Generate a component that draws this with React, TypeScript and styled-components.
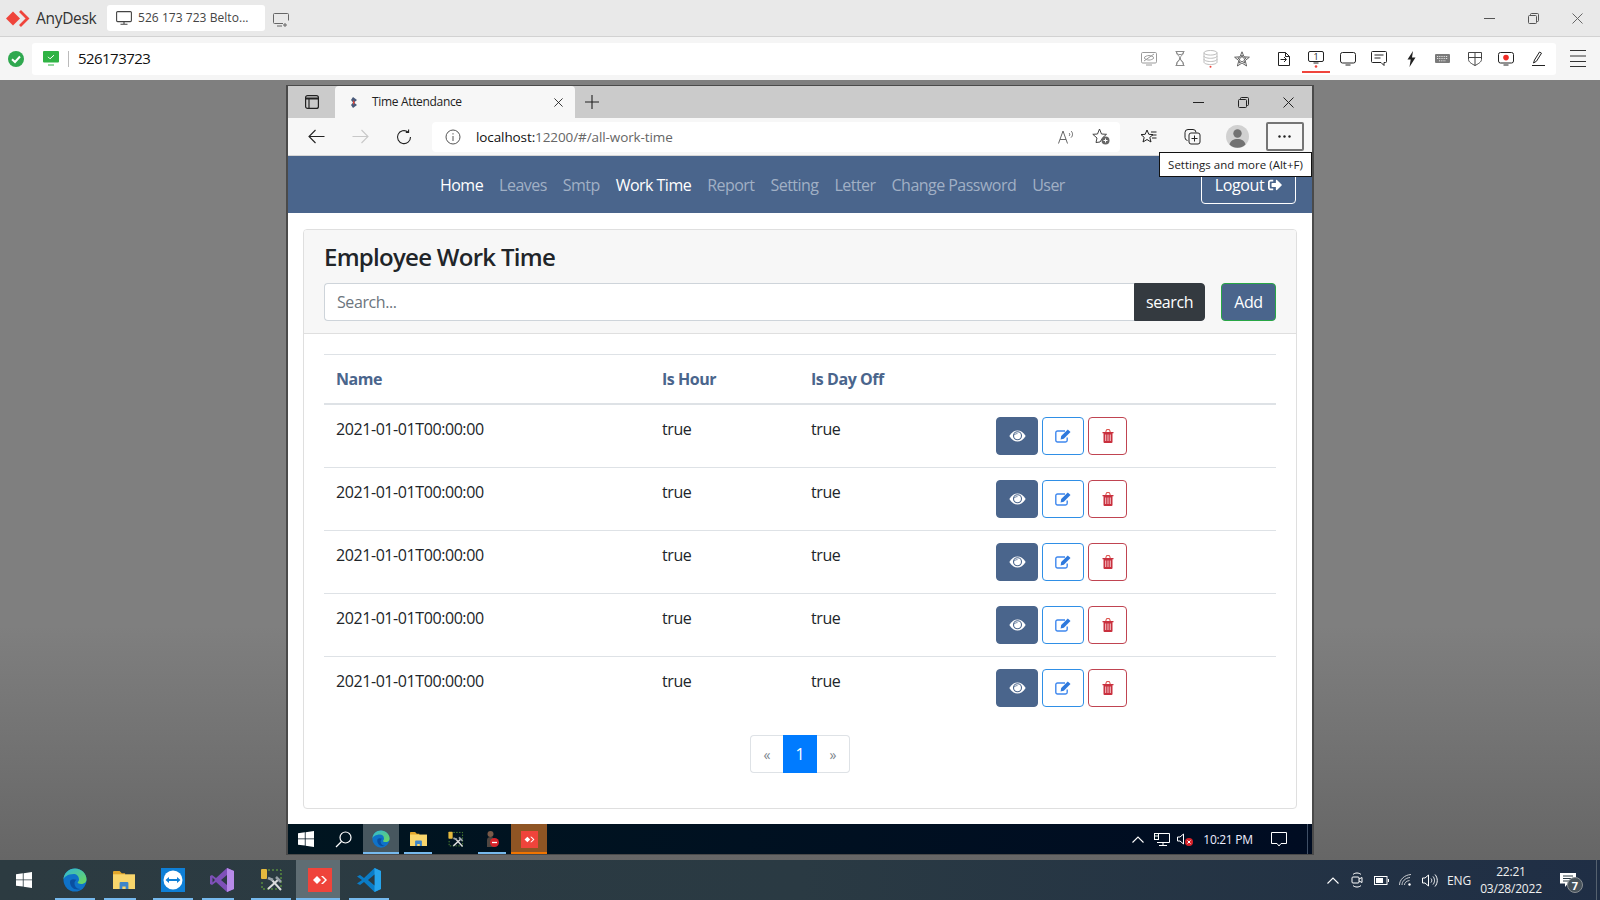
import React from "react";
import styled, { createGlobalStyle } from "styled-components";
import { FaSignOutAlt } from "react-icons/fa";

const sans = '"Open Sans", "Noto Sans", sans-serif';

const Global = createGlobalStyle`
  html, body { margin: 0; padding: 0; height: 100%; overflow: hidden; }
  body { font-family: ${sans}; color: #212529; }
  * { box-sizing: border-box; }
  svg { display: block; }
`;

const Screen = styled.div`
  width: 1600px;
  height: 900px;
  display: flex;
  flex-direction: column;
  overflow: hidden;
`;

/* ---------- AnyDesk chrome ---------- */
const AdTitleBar = styled.div`
  height: 37px;
  flex: none;
  background: #e9e9e9;
  border-bottom: 1px solid #d2d2d2;
  display: flex;
  align-items: center;
  padding-left: 6px;
`;
const AdBrand = styled.div`
  display: flex;
  align-items: center;
  gap: 6px;
  width: 101px;
  font-size: 15.5px;
  font-weight: 500;
  letter-spacing: -0.3px;
  color: #333;
`;
const AdTab = styled.div`
  width: 158px;
  height: 26px;
  margin-bottom: 1px;
  background: #fff;
  border-radius: 3px;
  display: flex;
  align-items: center;
  gap: 6px;
  padding-left: 9px;
  font-size: 12px;
  letter-spacing: 0.05px;
  color: #444;
  white-space: nowrap;
`;
const AdNewTab = styled.div`
  margin-left: 8px;
  margin-top: 4px;
`;
const WinControls = styled.div`
  margin-left: auto;
  display: flex;
  margin-right: 1px;
`;
const AdControl = styled.div`
  width: 44px;
  display: flex;
  justify-content: center;
`;
const AdAddressRow = styled.div`
  height: 43px;
  flex: none;
  background: #f5f5f5;
  display: flex;
  align-items: center;
  padding: 0 0 0 8px;
`;
const AdStatus = styled.div`
  width: 24px;
  flex: none;
`;
const AdField = styled.div`
  width: 1524px;
  height: 32px;
  background: #fff;
  border-radius: 3px;
  display: flex;
  align-items: center;
  padding-left: 11px;
  padding-right: 2px;
`;
const AdDivider = styled.div`
  width: 1px;
  height: 16px;
  background: #bbb;
  margin: 0 9px 0 9px;
`;
const AdNumber = styled.div`
  margin-bottom: 2px;
  font-size: 15px;
  letter-spacing: -0.55px;
  color: #111;
`;
const AdTools = styled.div`
  margin-left: auto;
  display: flex;
  align-items: center;
`;
const AdToolGroup = styled.div`
  display: flex;
  margin-right: 11px;
`;
const AdTool = styled.div<{ $w?: number; $on?: boolean }>`
  width: ${(p) => p.$w ?? 31.75}px;
  height: 32px;
  display: flex;
  align-items: center;
  justify-content: center;
  flex: none;
  position: relative;
  ${(p) => p.$on && `&::after { content: ""; position: absolute; left: 2px; right: 2px; bottom: 2px; height: 2px; background: #ef443b; }`}
`;
const AdMenu = styled.div`
  width: 44px;
  display: flex;
  justify-content: center;
`;

/* ---------- Desktop ---------- */
const Desktop = styled.div`
  flex: 1;
  background: linear-gradient(#7f7f7f 0, #7f7f7f 70%, #666 100%);
  padding: 5px 0 0 286px;
`;
const BrowserWindow = styled.div`
  width: 1028px;
  height: 770px;
  border: 2px solid #4a4a4a;
  border-top-width: 1px;
  border-bottom-width: 1px;
  display: flex;
  flex-direction: column;
  position: relative;
  background: #fff;
`;
const TabStrip = styled.div`
  height: 32px;
  flex: none;
  background: #cbcbcb;
  display: flex;
  align-items: flex-end;
`;
const StripIcon = styled.div`
  width: 47px;
  height: 32px;
  display: flex;
  align-items: center;
  justify-content: center;
`;
const BrowserTab = styled.div`
  width: 240px;
  height: 32px;
  background: #f7f7f7;
  border-radius: 4px 4px 0 0;
  display: flex;
  align-items: center;
  padding-left: 15px;
  font-size: 12px;
  letter-spacing: -0.33px;
  color: #222;
`;
const TabTitle = styled.span`
  margin-left: 14px;
  margin-bottom: 2px;
  flex: 1;
`;
const TabClose = styled.div`
  margin-right: 12px;
`;
const PlusBox = styled.div`
  width: 34px;
  height: 32px;
  display: flex;
  align-items: center;
  justify-content: center;
`;
const BrowserControl = styled.div`
  width: 45px;
  height: 32px;
  display: flex;
  align-items: center;
  justify-content: center;
`;
const Toolbar = styled.div`
  height: 38px;
  flex: none;
  background: #f7f7f7;
  border-bottom: 1px solid #d6d6d6;
  display: flex;
  align-items: center;
  padding-left: 6px;
`;
const NavIcon = styled.div`
  width: 44px;
  display: flex;
  justify-content: center;
`;
const Address = styled.div`
  width: 688px;
  height: 30px;
  margin-left: 6px;
  background: #fff;
  border-radius: 4px;
  display: flex;
  align-items: center;
  padding-left: 13px;
  font-size: 13.5px;
  letter-spacing: -0.1px;
  color: #666;
`;
const Host = styled.span`
  color: #111;
  margin-left: 15px;
`;
const AddressEnd = styled.div`
  margin-left: auto;
  display: flex;
  align-items: center;
  gap: 17px;
  padding-right: 10px;
`;
const ToolGroup = styled.div`
  margin-left: 6px;
  display: flex;
  align-items: center;
`;
const ToolIcon = styled.div`
  width: 44.5px;
  display: flex;
  justify-content: center;
`;
const MoreButton = styled.div`
  width: 38px;
  height: 29px;
  margin-left: 6px;
  border: 2px solid #757575;
  border-radius: 2px;
  display: flex;
  align-items: center;
  justify-content: center;
`;
const Tooltip = styled.div`
  position: absolute;
  top: 66px;
  right: 0;
  width: 153px;
  height: 25px;
  background: #fff;
  border: 1px solid #111;
  display: flex;
  align-items: center;
  justify-content: center;
  font-size: 11.5px;
  letter-spacing: 0.02px;
  color: #222;
  white-space: nowrap;
  z-index: 5;
`;

/* ---------- Page ---------- */
const NavBar = styled.div`
  height: 57px;
  flex: none;
  background: #4a658c;
  display: flex;
  align-items: center;
  padding-left: 144px;
  padding-right: 16px;
`;
const NavItem = styled.a<{ $active?: boolean }>`
  padding: 8px;
  font-size: 16px;
  line-height: 24px;
  letter-spacing: -0.53px;
  color: ${(p) => (p.$active ? "#fff" : "#a1b0c5")};
  white-space: nowrap;
`;
const LogoutButton = styled.button`
  margin-left: auto;
  margin-top: 1px;
  width: 95px;
  height: 38px;
  background: transparent;
  border: 1px solid #fff;
  border-radius: 4px;
  color: #fff;
  font-family: ${sans};
  font-size: 16px;
  letter-spacing: -0.4px;
  display: flex;
  align-items: center;
  justify-content: center;
  gap: 4px;
`;
const Main = styled.div`
  flex: 1;
  padding: 16px 15px 15px 15px;
`;
const Card = styled.div`
  height: 580px;
  background: #fff;
  border: 1px solid #dfdfdf;
  border-radius: 4px;
  overflow: hidden;
`;
const CardHeader = styled.div`
  height: 104px;
  background: #f7f7f7;
  border-bottom: 1px solid #dfdfdf;
  padding: 12px 20px;
`;
const CardTitle = styled.h4`
  margin: 0 0 12px;
  font-size: 24px;
  line-height: 29px;
  font-weight: 600;
  letter-spacing: -0.72px;
  color: #212529;
`;
const SearchRow = styled.div`
  display: flex;
`;
const SearchInput = styled.input`
  flex: 1;
  min-width: 0;
  height: 38px;
  padding: 0 12px;
  background: #fff;
  border: 1px solid #ced4da;
  border-right: 0;
  border-radius: 4px 0 0 4px;
  font-family: ${sans};
  font-size: 16px;
  letter-spacing: -0.4px;
  outline: none;
  &::placeholder { color: #6c757d; opacity: 1; }
`;
const SearchButton = styled.button`
  width: 71px;
  height: 38px;
  background: #343a40;
  border: 1px solid #343a40;
  border-radius: 0 4px 4px 0;
  color: #fff;
  font-family: ${sans};
  font-size: 16px;
  letter-spacing: -0.4px;
`;
const AddButton = styled.button`
  width: 55px;
  height: 38px;
  margin-left: 16px;
  background: #4a658c;
  border: 1px solid #28a745;
  border-radius: 4px;
  color: #fff;
  font-family: ${sans};
  font-size: 16px;
  letter-spacing: -0.4px;
`;
const CardBody = styled.div`
  padding: 20px 20px 0;
`;
const Table = styled.table`
  width: 100%;
  table-layout: fixed;
  border-collapse: collapse;
`;
const Th = styled.th<{ $w?: number }>`
  width: ${(p) => (p.$w ? `${p.$w}px` : "auto")};
  padding: 12px;
  height: 48px;
  text-align: left;
  border-top: 1px solid #dee2e6;
  border-bottom: 2px solid #dee2e6;
  font-size: 16px;
  line-height: 24px;
  font-weight: 700;
  letter-spacing: -0.45px;
  color: #4a658c;
`;
const Td = styled.td`
  padding: 12px;
  vertical-align: top;
  border-top: 1px solid #dee2e6;
  font-size: 16px;
  line-height: 24px;
  letter-spacing: -0.42px;
  color: #212529;
`;
const Actions = styled.div`
  display: flex;
  gap: 4px;
`;
const ActionButton = styled.button<{ $kind: "view" | "edit" | "del" }>`
  width: ${(p) => (p.$kind === "del" ? 39 : 42)}px;
  height: 38px;
  padding: 0;
  border-radius: 4px;
  display: flex;
  align-items: center;
  justify-content: center;
  background: ${(p) => (p.$kind === "view" ? "#4a658c" : "#fff")};
  border: 1px solid ${(p) => (p.$kind === "view" ? "#4a658c" : p.$kind === "edit" ? "#2f8fe6" : "#c04451")};
`;
const Pager = styled.div`
  margin-top: 16px;
  display: flex;
  justify-content: center;
`;
const PageItem = styled.div<{ $active?: boolean }>`
  width: ${(p) => (p.$active ? 34 : 33)}px;
  height: 38px;
  display: flex;
  align-items: center;
  justify-content: center;
  font-size: ${(p) => (p.$active ? 16 : 14)}px;
  background: ${(p) => (p.$active ? "#007bff" : "#fff")};
  color: ${(p) => (p.$active ? "#fff" : "#7d858d")};
  border: ${(p) => (p.$active ? "0" : "1px solid #dee2e6")};
  &:first-child { border-radius: 4px 0 0 4px; border-right: 0; }
  &:last-child { border-radius: 0 4px 4px 0; border-left: 0; }
`;

/* ---------- Remote taskbar ---------- */
const RemoteBar = styled.div`
  height: 30px;
  flex: none;
  background: linear-gradient(90deg, #001520, #000c22);
  display: flex;
  align-items: stretch;
  gap: 1px;
`;
const RemoteSlot = styled.div<{ $bg?: string; $line?: string; $short?: boolean; $w?: number }>`
  width: ${(p) => p.$w ?? 36}px;
  display: flex;
  align-items: center;
  justify-content: center;
  position: relative;
  background: ${(p) => p.$bg ?? "transparent"};
  ${(p) =>
    p.$line &&
    `&::after { content: ""; position: absolute; bottom: 0; height: 2px; background: ${p.$line}; left: ${p.$short ? 4 : 0}px; right: ${p.$short ? 4 : 0}px; }`}
`;
const RemoteTray = styled.div`
  margin-left: auto;
  display: flex;
  align-items: center;
  color: #fff;
`;
const TraySlot = styled.div<{ $w: number }>`
  width: ${(p) => p.$w}px;
  height: 100%;
  display: flex;
  align-items: center;
  justify-content: center;
  flex: none;
`;
const RemoteClock = styled.div`
  font-size: 12px;
  letter-spacing: -0.3px;
  color: #eef;
`;
const RemoteEdge = styled.div`
  width: 5px;
  height: 100%;
  margin-left: 8px;
  border-left: 1px solid #3f4f66;
`;

/* ---------- Host taskbar ---------- */
const HostBar = styled.div`
  height: 40px;
  flex: none;
  background: linear-gradient(90deg, #2c3b41, #2a3a43 50%, #1f2e45);
  display: flex;
  align-items: stretch;
`;
const StartSlot = styled.div`
  width: 48px;
  display: flex;
  align-items: center;
  justify-content: center;
`;
const HostApps = styled.div`
  display: flex;
  gap: 9px;
  padding-left: 7px;
`;
const HostSlot = styled.div<{ $current?: boolean; $stack?: boolean }>`
  width: ${(p) => (p.$current ? 44 : 40)}px;
  margin-left: ${(p) => (p.$current ? -4 : 0)}px;
  padding-left: ${(p) => (p.$current ? 4 : 0)}px;
  display: flex;
  align-items: center;
  justify-content: center;
  position: relative;
  background: ${(p) => (p.$current ? "#5f6d73" : "transparent")};
  &::after {
    content: "";
    position: absolute;
    left: 0;
    right: ${(p) => (p.$stack ? 8 : 0)}px;
    bottom: 0;
    height: 2px;
    background: #76b9ed;
  }
`;
const HostTray = styled.div`
  margin-left: auto;
  display: flex;
  align-items: stretch;
  color: #fff;
`;
const Lang = styled.div`
  font-size: 12px;
  letter-spacing: -0.1px;
  color: #f0f0f0;
`;
const Clock = styled.div`
  display: flex;
  flex-direction: column;
  align-items: center;
  font-size: 12px;
  line-height: 17px;
  letter-spacing: -0.2px;
  color: #f0f0f0;
`;
const ShowDesktop = styled.div`
  width: 4px;
  margin-left: 5px;
  border-left: 1px solid #55616f;
`;
const NotifyBadge = styled.div`
  position: absolute;
  right: -7px;
  bottom: -6px;
  width: 16px;
  height: 16px;
  border-radius: 50%;
  background: #47525a;
  border: 1px solid #8a8f94;
  color: #fff;
  font-size: 11px;
  font-weight: 700;
  display: flex;
  align-items: center;
  justify-content: center;
`;
const NotifyBox = styled.div`
  position: relative;
`;

/* ---------- Drawings ---------- */
type IP = { s?: number; c?: string };

const AnyLogo = () => (
  <svg width="24" height="17" viewBox="0 0 24 17">
    <path d="M0 8.500 7 1.500 14 8.500 7 15.500z" fill="#ef443b" />
    <path d="M14 1 21.500 8.500 14 16" fill="none" stroke="#ef443b" strokeWidth="2.800" />
  </svg>
);
const AnySquare = ({ s = 24 }: IP) => (
  <svg width={s} height={s} viewBox="0 0 24 24">
    <rect width="24" height="24" fill="#ef443b" />
    <path d="M5 12 9 8 13 12 9 16z M13 8l2-0 4 4-4 4-2 0 4-4z" fill="#fff" />
  </svg>
);
const Monitor = ({ s = 16, c = "#444" }: IP) => (
  <svg width={s} height={s} viewBox="0 0 16 16" fill="none" stroke={c} strokeWidth="1.1">
    <rect x=".6" y="1.6" width="14.8" height="10" rx="1" />
    <path d="M8 11.6v2.4M4.5 14.2h7" />
  </svg>
);
const NewSession = () => (
  <svg width="16" height="16" viewBox="0 0 16 16" fill="none" stroke="#666" strokeWidth="1">
    <path d="M10 11.5H1.5a1 1 0 0 1-1-1v-8a1 1 0 0 1 1-1h13a1 1 0 0 1 1 1v6" />
    <path d="M4 14h5M12 11v4M10 13h4" />
  </svg>
);
const Minimize = ({ c = "#555" }: IP) => (
  <svg width="11" height="11" viewBox="0 0 11 11" stroke={c}><path d="M0 5.5h11" /></svg>
);
const Restore = ({ c = "#555" }: IP) => (
  <svg width="11" height="11" viewBox="0 0 11 11" fill="none" stroke={c}>
    <rect x=".5" y="2.5" width="8" height="8" rx="1" />
    <path d="M2.5 2.5v-1a1 1 0 0 1 1-1h6a1 1 0 0 1 1 1v6a1 1 0 0 1-1 1h-1" />
  </svg>
);
const Close = ({ c = "#666", s = 11 }: IP) => (
  <svg width={s} height={s} viewBox="0 0 11 11" stroke={c}><path d="M.5.5l10 10M10.5.5l-10 10" /></svg>
);
const GreenCheck = () => (
  <svg width="16" height="16" viewBox="0 0 16 16">
    <circle cx="8" cy="8" r="8" fill="#2fa84f" />
    <path d="M4 8.2 7 11l5-5.5" fill="none" stroke="#fff" strokeWidth="2" />
  </svg>
);
const GreenMonitor = () => (
  <svg width="16" height="15" viewBox="0 0 16 15">
    <rect width="16" height="11.5" rx="1" fill="#2fb344" />
    <path d="M5 5.8 7 7.8l4-3.6" fill="none" stroke="#fff" />
    <path d="M5 14h6" stroke="#2fb344" />
  </svg>
);
const HiddenScreen = () => (
  <svg width="16" height="14" viewBox="0 0 16 14" fill="none" stroke="#9a9a9a">
    <rect x=".5" y=".5" width="15" height="10.5" rx="1.2" />
    <path d="M3 5.8c2.5-3 7.5-3 10 0-2.5 3-7.5 3-10 0zM3 9l10-7M5 13h6" />
  </svg>
);
const Hourglass = () => (
  <svg width="12" height="16" viewBox="0 0 12 16" fill="none" stroke="#8a8a8a">
    <path d="M1.5.5h9M1.5 14.5h9M2.5 1c0 3.5 7 3.5 7 0M2.5 14c0-4 3.5-4 3.5-7 0 3 3.5 3 3.5 7" />
    <path d="M2.5 1c0 3.5 3.5 4 3.5 6s-3.5 3-3.5 7M9.5 1c0 3.5-3.5 4-3.5 6s3.5 3 3.5 7" />
  </svg>
);
const Database = () => (
  <svg width="15" height="18" viewBox="0 0 15 18" fill="none" stroke="#bdbdbd">
    <ellipse cx="7.5" cy="2.8" rx="6.5" ry="2.3" />
    <path d="M1 2.8v9.4c0 1.3 3 2.3 6.5 2.3s6.5-1 6.5-2.3V2.8M1 6c0 1.3 3 2.3 6.5 2.3S14 7.3 14 6M1 9.2c0 1.3 3 2.3 6.5 2.3s6.5-1 6.5-2.3" />
    <circle cx="7.5" cy="16.8" r="1" fill="#ef443b" stroke="none" />
  </svg>
);
const Star = () => (
  <svg width="16" height="16" viewBox="0 0 16 16" fill="none" stroke="#555" strokeWidth=".9">
    <path d="M8 .8 10 5.8 15.4 6.2 11.2 9.6 12.6 15 8 12 3.4 15 4.8 9.6.6 6.2 6 5.8z" />
    <path d="M8 4 9.2 7h3L9.9 9l.8 3L8 10.3 5.3 12l.8-3L3.8 7h3z" />
  </svg>
);
const FileArrow = () => (
  <svg width="12" height="14" viewBox="0 0 12 14" fill="none" stroke="#222">
    <path d="M.5.5h7l4 4v9H.5zM7.5.5v4h4M2.5 7.5H8M6 5l2.5 2.5L6 10" />
  </svg>
);
const ScreenOne = () => (
  <svg width="16" height="18" viewBox="0 0 16 18" fill="none" stroke="#222">
    <rect x=".5" y="1.500" width="15" height="10" rx="1.5" />
    <path d="M5.5 13h5" />
    <text x="8" y="10" textAnchor="middle" fontSize="9" fill="#222" stroke="none" fontFamily={sans}>1</text>
    <circle cx="8" cy="16.500" r="1.3" fill="#ef443b" stroke="none" />
  </svg>
);
const ScreenPlain = () => (
  <svg width="16" height="14" viewBox="0 0 16 14" fill="none" stroke="#222">
    <rect x=".5" y=".5" width="15" height="10.5" rx="2" />
    <path d="M5.5 13h5" />
  </svg>
);
const Chat = () => (
  <svg width="16" height="15" viewBox="0 0 16 15" fill="none" stroke="#222">
    <path d="M1.5.5h13a1 1 0 0 1 1 1v9a1 1 0 0 1-1 1H13v3l-3-3H1.5a1 1 0 0 1-1-1v-9a1 1 0 0 1 1-1z" />
    <path d="M3.5 4h9M3.5 7h6" />
  </svg>
);
const Bolt = () => (
  <svg width="9" height="16" viewBox="0 0 9 16" fill="#222"><path d="M6 0 .5 8.5h3.2L2.5 16 8.5 6.5H5z" /></svg>
);
const Keyboard = () => (
  <svg width="15" height="9" viewBox="0 0 15 9">
    <rect width="15" height="9" rx="1" fill="#7a7a7a" />
    <path d="M2 2.5h11M2 4.5h11M4 6.8h7" stroke="#e4e4e4" strokeDasharray="1 .8" />
  </svg>
);
const Shield = () => (
  <svg width="14" height="15" viewBox="0 0 14 15" fill="none" stroke="#444">
    <path d="M.5 1.5h13v7c0 2.5-3.5 4.5-6.5 6-3-1.5-6.5-3.5-6.5-6z" />
    <path d="M7 1.5v13M.5 6.5h13" />
  </svg>
);
const RecordScreen = () => (
  <svg width="16" height="14" viewBox="0 0 16 14" fill="none" stroke="#222">
    <rect x=".5" y=".5" width="15" height="10.5" rx="2" />
    <path d="M5.5 13h5" />
    <circle cx="8" cy="5.6" r="2.8" fill="#ef2b24" stroke="none" />
  </svg>
);
const Pen = () => (
  <svg width="14" height="15" viewBox="0 0 14 15" fill="none" stroke="#222">
    <path d="M1 14.5h13M2.5 12l1-3 5-8 2 1.2-5 8z" />
  </svg>
);
const Burger = () => (
  <svg width="16" height="17" viewBox="0 0 16 17" stroke="#333"><path d="M0 .5h16M0 6h16M0 11.5h16M0 16.5h16" /></svg>
);
const SidebarIcon = () => (
  <svg width="14" height="14" viewBox="0 0 14 14" fill="none" stroke="#222" strokeWidth="1.2">
    <rect x=".6" y=".6" width="12.8" height="12.8" rx="2" />
    <path d="M.6 3.5h12.8" strokeWidth="2" />
    <path d="M4 3.5v10" />
  </svg>
);
const Favicon = () => (
  <svg width="8" height="11" viewBox="0 0 8 11">
    <path d="M3 0 7 3 4 5.5 7 8 3 11 1 8 3 5.5 1 3z" fill="#4a5a7a" />
    <path d="M3 3 5 5.5 3 8z" fill="#d9453d" />
  </svg>
);
const Plus = () => (
  <svg width="14" height="14" viewBox="0 0 14 14" stroke="#222" strokeWidth="1.1"><path d="M7 0v14M0 7h14" /></svg>
);
const Arrow = ({ c = "#222", flip }: { c?: string; flip?: boolean }) => (
  <svg width="17" height="15" viewBox="0 0 17 15" fill="none" stroke={c} strokeWidth="1.1" transform={flip ? "scale(-1 1)" : undefined}>
    <path d="M16.5 7.5H1M7.5 1 1 7.5 7.5 14" />
  </svg>
);
const Reload = () => (
  <svg width="16" height="16" viewBox="0 0 16 16" fill="none" stroke="#222" strokeWidth="1.1">
    <path d="M14.5 8A6.5 6.5 0 1 1 12 3M12.6.6V3.4H9.8" />
  </svg>
);
const Info = () => (
  <svg width="16" height="16" viewBox="0 0 16 16" fill="none" stroke="#555">
    <circle cx="8" cy="8" r="7" />
    <path d="M8 7v5M8 4.2v1.3" />
  </svg>
);
const ReadAloud = () => (
  <svg width="17" height="14" viewBox="0 0 17 14" fill="none" stroke="#666">
    <path d="M.5 13.5 5 1l4.5 12.5M2 9.5h6M11 3c1 .8 1 2.2 0 3M13 1c2 1.6 2 5 0 6.6" />
  </svg>
);
const FavAdd = () => (
  <svg width="18" height="17" viewBox="0 0 18 17" fill="none" stroke="#444">
    <path d="M7.5 1 9.5 6 14.5 6.3 10.8 9.6 8 14 4 14.5 5 10 .8 6.3 5.5 6z" />
    <circle cx="13.5" cy="12.5" r="4" fill="#666" stroke="none" />
    <path d="M13.5 10.5v4M11.5 12.5h4" stroke="#fff" />
  </svg>
);
const FavList = () => (
  <svg width="17" height="15" viewBox="0 0 17 15" fill="none" stroke="#222">
    <path d="M7 1 8.8 5.3 13 5.6 9.8 8.4 11 13 7 10.5 3 13 4.2 8.4 1 5.6 5.2 5.3zM11 3h5.5M12 6h4.5M12 9h4.5" />
  </svg>
);
const Collections = () => (
  <svg width="17" height="17" viewBox="0 0 17 17" fill="none" stroke="#222">
    <rect x="5" y="5" width="11" height="11" rx="2" />
    <path d="M10.5 7.5v6M7.5 10.5h6M3.5 12.5A3 3 0 0 1 1 9.5V4.5a3 3 0 0 1 3-3h5a3 3 0 0 1 3 3" />
  </svg>
);
const Avatar = () => (
  <svg width="23" height="23" viewBox="0 0 23 23">
    <circle cx="11.5" cy="11.5" r="11.5" fill="#d1d1d1" />
    <circle cx="11.5" cy="8.5" r="4.2" fill="#727272" />
    <path d="M3.5 19.5c1-4 4-5.5 8-5.5s7 1.5 8 5.5a11.5 11.5 0 0 1-16 0z" fill="#727272" />
  </svg>
);
const Dots = () => (
  <svg width="13" height="3" viewBox="0 0 13 3" fill="#222">
    <circle cx="1.5" cy="1.5" r="1.2" /><circle cx="6.5" cy="1.5" r="1.2" /><circle cx="11.5" cy="1.5" r="1.2" />
  </svg>
);
const WinLogo = ({ s = 16 }: IP) => (
  <svg width={s} height={s} viewBox="0 0 16 16" fill="#fff">
    <path d="M0 2.3 6.8 1.3V7.5H0zM7.6 1.2 16 0V7.5H7.6zM0 8.3H6.8V14.6L0 13.7zM7.6 8.3H16V16L7.6 14.8z" />
  </svg>
);
const SearchGlass = () => (
  <svg width="17" height="17" viewBox="0 0 17 17" fill="none" stroke="#fff" strokeWidth="1.2">
    <circle cx="10.5" cy="6.5" r="5.5" /><path d="M6.5 10.5 1 16" />
  </svg>
);
const EdgeLogo = ({ s = 18 }: IP) => (
  <svg width={s} height={s} viewBox="0 0 24 24">
    <defs>
      <linearGradient id="edgeA" x1="0" y1="0" x2="1" y2="1">
        <stop offset="0" stopColor="#2fb5d8" /><stop offset="1" stopColor="#6ed85a" />
      </linearGradient>
    </defs>
    <circle cx="12" cy="12" r="11.5" fill="#0f72c8" />
    <path d="M.5 12C.5 5 6 .5 12 .5c6.500 0 11.500 5 11.500 11 0 3-2.800 4.500-5.300 4.500-2.200 0-3.500-.8-3.500-1.500 0-.7 1.300-1.200 1.300-3C16 8 13.500 6 10.500 6 5 6 .5 9 .5 12z" fill="url(#edgeA)" />
    <path d="M7 14c0 4 3 7.500 7.500 7.500 1 0 2-.2 3-.6-3.500.3-6-2.400-6-5.400 0-1.500.6-2.800 2-3.700C10 10.500 7 11 7 14z" fill="#0a4fa0" />
  </svg>
);
const FolderIcon = ({ s = 20 }: IP) => (
  <svg width={s} height={s * 0.85} viewBox="0 0 20 17">
    <path d="M0 1a1 1 0 0 1 1-1h5l2 2h3v2H0z" fill="#e3a72b" />
    <rect y="3" width="20" height="14" fill="#f9d66c" />
    <path d="M6 17v-6a1 1 0 0 1 1-1h6a1 1 0 0 1 1 1v6h-2.500v-3h-3v3z" fill="#3f86c9" />
  </svg>
);
const ToolsIcon = ({ s = 22 }: IP) => (
  <svg width={s} height={s} viewBox="0 0 24 24" fill="none">
    <rect x="2" y="1" width="6" height="10" rx="1" fill="#e5b93e" />
    <path d="M9 2h13v19H3v-8" stroke="#6fb33c" strokeDasharray="2 2" />
    <path d="M9 21 20 11M12 11 22 22" stroke="#dcdcdc" strokeWidth="2" />
    <path d="M17 9l5 5M9 10l5 2" stroke="#9aa2a8" strokeWidth="2.500" />
  </svg>
);
const PersonBlocked = () => (
  <svg width="13" height="18" viewBox="0 0 13 18">
    <circle cx="4.500" cy="4" r="3" fill="#7a5a48" />
    <path d="M1 17V10c0-2 1.500-3 3.500-3S8 8 8 10v7z" fill="#4f4640" />
    <circle cx="8.500" cy="12.500" r="4.500" fill="#d8232a" />
    <path d="M6 12.500h5" stroke="#fff" strokeWidth="1.300" />
  </svg>
);
const TeamViewer = () => (
  <svg width="24" height="24" viewBox="0 0 24 24">
    <rect width="24" height="24" fill="#0e7fd6" />
    <circle cx="12" cy="12" r="9.500" fill="#fff" />
    <path d="M4.500 12 8 9v2h8V9l3.500 3-3.500 3v-2H8v2z" fill="#0e7fd6" />
  </svg>
);
const VisualStudio = () => (
  <svg width="24" height="24" viewBox="0 0 24 24">
    <path d="M17 0 24 3v18l-7 3L6 14l-4 3-2-1V8l2-1 4 3z" fill="#7e50b8" />
    <path d="M17 0 24 3v18l-7 3z" fill="#b78ae8" />
    <path d="M17 7 11 12l6 5zM2.500 9.500v5L5 12z" fill="#2b3a42" />
  </svg>
);
const VSCode = () => (
  <svg width="24" height="24" viewBox="0 0 24 24">
    <path d="M17.500 0 24 3v18l-6.500 3L7 14l-4 3-3-1.500L5 12 0 8.500 3 7l4 3z" fill="#0a7cc7" />
    <path d="M17.500 0 24 3v18l-6.500 3z" fill="#26a4ec" />
    <path d="M17.500 6.500 11 12l6.500 5.500z" fill="#2b3a42" />
  </svg>
);
const Chevron = () => (
  <svg width="12" height="7" viewBox="0 0 12 7" fill="none" stroke="#fff" strokeWidth="1.100"><path d="M.5 6.500 6 1l5.500 5.500" /></svg>
);
const NetworkIcon = () => (
  <svg width="16" height="13" viewBox="0 0 16 13" fill="none" stroke="#fff">
    <path d="M4 .5h11.500v9H3M9 9.500v3M5 12.500h8" />
    <rect x=".5" y=".5" width="4" height="6" fill="#001520" />
    <path d="M1 3h3" />
  </svg>
);
const MutedSpeaker = () => (
  <svg width="17" height="13" viewBox="0 0 17 13">
    <path d="M.5 4h2.500L6.500 1v10L3 8H.5z" fill="none" stroke="#fff" />
    <circle cx="12" cy="9" r="4" fill="#d8232a" />
    <path d="M10.500 7.500l3 3M13.500 7.500l-3 3" stroke="#fff" />
  </svg>
);
const ActionCenter = () => (
  <svg width="16" height="15" viewBox="0 0 16 15" fill="none" stroke="#fff">
    <path d="M.5.5h15v11H10L8 14 6 11.500H.5z" />
  </svg>
);
const CameraIcon = () => (
  <svg width="12" height="16" viewBox="0 0 12 16" fill="none" stroke="#fff">
    <rect x="1" y="5" width="7" height="6" rx="1" />
    <path d="M8 7l3-1.500v5L8 9M2 2.500C4 .5 8 .5 10 2.500M2 13.500c2 2 6 2 8 0" />
  </svg>
);
const BatteryIcon = () => (
  <svg width="15" height="9" viewBox="0 0 15 9" fill="none" stroke="#fff">
    <rect x=".5" y=".5" width="12.500" height="8" />
    <rect x="2" y="2" width="7" height="5" fill="#fff" stroke="none" />
    <path d="M14.500 3v3" />
  </svg>
);
const WifiIcon = () => (
  <svg width="13" height="12" viewBox="0 0 13 12" fill="none" stroke="#c9ccd0">
    <path d="M.5 11C.5 6 5 1 12 .5M3 11c0-3.500 3-7 8-7.500M5.500 11c0-2 1.500-4 5-4.500" />
    <circle cx="10.500" cy="10.500" r="1.200" fill="#fff" stroke="none" />
  </svg>
);
const SpeakerIcon = () => (
  <svg width="16" height="13" viewBox="0 0 16 13" fill="none" stroke="#fff">
    <path d="M.5 4H3L6.500 1v11L3 9H.5zM9 4.500c1 1.200 1 2.800 0 4M11 2.500c2 2.400 2 5.600 0 8M13 .5c3 3.500 3 8.500 0 12" />
  </svg>
);
const Notes = () => (
  <svg width="16" height="14" viewBox="0 0 16 14" fill="#fff">
    <path d="M0 0h16v10.500H8L5 14v-3.500H0z" />
    <path d="M3 3h10M3 5.500h10M3 8h7" stroke="#2a3a43" />
  </svg>
);
const EyeIcon = () => (
  <svg width="17" height="12" viewBox="0 0 17 12">
    <path d="M.3 6C2.800 2 5.500.4 8.500.4S14.200 2 16.700 6C14.200 10 11.500 11.600 8.500 11.600S2.800 10 .3 6z" fill="#fff" />
    <circle cx="8.500" cy="5.800" r="4" fill="none" stroke="#4a658c" strokeWidth="1.100" />
    <path d="M4 6c1.500-1.500 2.500-2.400 4.500-2.400" stroke="#4a658c" strokeWidth=".8" fill="none" />
  </svg>
);
const EditIcon = () => (
  <svg width="16" height="14" viewBox="0 0 16 14" fill="none">
    <path d="M10 2H2.500A1.700 1.700 0 0 0 .8 3.700v7.600a1.700 1.700 0 0 0 1.700 1.700h8a1.700 1.700 0 0 0 1.700-1.700V8.500" stroke="#3f88ee" strokeWidth="1.400" />
    <path d="M12.800.5 15.500 3 8.800 9.700 5.600 10.400 6.200 7.100z" fill="#2e79dd" />
  </svg>
);
const TrashIcon = () => (
  <svg width="12" height="14" viewBox="0 0 12 14">
    <path d="M.5 3h11v1.200h-1V13a1 1 0 0 1-1 1h-7a1 1 0 0 1-1-1V4.200h-1z" fill="#c9303e" />
    <path d="M3.800 3 4.500.6h3L8.200 3" fill="none" stroke="#d9453d" />
    <path d="M3.700 5.500v6.500M6 5.500v6.500M8.300 5.500v6.500" stroke="#f5c6ca" />
  </svg>
);

const rows = [0, 1, 2, 3, 4];
const navItems: [string, boolean][] = [
  ["Home", true], ["Leaves", false], ["Smtp", false], ["Work Time", true], ["Report", false],
  ["Setting", false], ["Letter", false], ["Change Password", false], ["User", false],
];

export default function App() {
  return (
    <Screen>
      <Global />
      <AdTitleBar>
        <AdBrand><AnyLogo />AnyDesk</AdBrand>
        <AdTab><Monitor />526 173 723 Belto...</AdTab>
        <AdNewTab><NewSession /></AdNewTab>
        <WinControls>
          <AdControl><Minimize /></AdControl>
          <AdControl><Restore /></AdControl>
          <AdControl><Close /></AdControl>
        </WinControls>
      </AdTitleBar>
      <AdAddressRow>
        <AdStatus><GreenCheck /></AdStatus>
        <AdField>
          <GreenMonitor />
          <AdDivider />
          <AdNumber>526173723</AdNumber>
          <AdTools>
            <AdToolGroup>
              <AdTool $w={31}><HiddenScreen /></AdTool>
              <AdTool $w={31}><Hourglass /></AdTool>
              <AdTool $w={31}><Database /></AdTool>
              <AdTool $w={31}><Star /></AdTool>
            </AdToolGroup>
            <AdTool><FileArrow /></AdTool>
            <AdTool $on><ScreenOne /></AdTool>
            <AdTool><ScreenPlain /></AdTool>
            <AdTool><Chat /></AdTool>
            <AdTool><Bolt /></AdTool>
            <AdTool><Keyboard /></AdTool>
            <AdTool><Shield /></AdTool>
            <AdTool><RecordScreen /></AdTool>
            <AdTool><Pen /></AdTool>
          </AdTools>
        </AdField>
        <AdMenu><Burger /></AdMenu>
      </AdAddressRow>

      <Desktop>
        <BrowserWindow>
          <TabStrip>
            <StripIcon><SidebarIcon /></StripIcon>
            <BrowserTab>
              <Favicon />
              <TabTitle>Time Attendance</TabTitle>
              <TabClose><Close c="#111" s={9} /></TabClose>
            </BrowserTab>
            <PlusBox><Plus /></PlusBox>
            <WinControls>
              <BrowserControl><Minimize c="#222" /></BrowserControl>
              <BrowserControl><Restore c="#222" /></BrowserControl>
              <BrowserControl><Close c="#222" /></BrowserControl>
            </WinControls>
          </TabStrip>
          <Toolbar>
            <NavIcon><Arrow /></NavIcon>
            <NavIcon><Arrow c="#c8c8c8" flip /></NavIcon>
            <NavIcon><Reload /></NavIcon>
            <Address>
              <Info />
              <Host>localhost:</Host>12200/#/all-work-time
              <AddressEnd><ReadAloud /><FavAdd /></AddressEnd>
            </Address>
            <ToolGroup>
              <ToolIcon><FavList /></ToolIcon>
              <ToolIcon><Collections /></ToolIcon>
              <ToolIcon><Avatar /></ToolIcon>
            </ToolGroup>
            <MoreButton><Dots /></MoreButton>
          </Toolbar>
          <Tooltip>Settings and more (Alt+F)</Tooltip>
          <NavBar>
            {navItems.map(([label, on]) => (
              <NavItem key={label} $active={on}>{label}</NavItem>
            ))}
            <LogoutButton>Logout <FaSignOutAlt size={14} /></LogoutButton>
          </NavBar>
          <Main>
            <Card>
              <CardHeader>
                <CardTitle>Employee Work Time</CardTitle>
                <SearchRow>
                  <SearchInput placeholder="Search..." />
                  <SearchButton>search</SearchButton>
                  <AddButton>Add</AddButton>
                </SearchRow>
              </CardHeader>
              <CardBody>
                <Table>
                  <thead>
                    <tr>
                      <Th $w={326}>Name</Th>
                      <Th $w={149}>Is Hour</Th>
                      <Th $w={185}>Is Day Off</Th>
                      <Th />
                    </tr>
                  </thead>
                  <tbody>
                    {rows.map((r) => (
                      <tr key={r}>
                        <Td>2021-01-01T00:00:00</Td>
                        <Td>true</Td>
                        <Td>true</Td>
                        <Td>
                          <Actions>
                            <ActionButton $kind="view"><EyeIcon /></ActionButton>
                            <ActionButton $kind="edit"><EditIcon /></ActionButton>
                            <ActionButton $kind="del"><TrashIcon /></ActionButton>
                          </Actions>
                        </Td>
                      </tr>
                    ))}
                  </tbody>
                </Table>
                <Pager>
                  <PageItem>«</PageItem>
                  <PageItem $active>1</PageItem>
                  <PageItem>»</PageItem>
                </Pager>
              </CardBody>
            </Card>
          </Main>
          <RemoteBar>
            <RemoteSlot><WinLogo /></RemoteSlot>
            <RemoteSlot $w={37}><SearchGlass /></RemoteSlot>
            <RemoteSlot $bg="#47575f" $line="#76b9ed"><EdgeLogo /></RemoteSlot>
            <RemoteSlot $line="#76b9ed" $short><FolderIcon s={17} /></RemoteSlot>
            <RemoteSlot><ToolsIcon s={17} /></RemoteSlot>
            <RemoteSlot $line="#76b9ed" $short><PersonBlocked /></RemoteSlot>
            <RemoteSlot $bg="#8f5524" $line="#f07400"><AnySquare s={17} /></RemoteSlot>
            <RemoteTray>
              <TraySlot $w={24}><Chevron /></TraySlot>
              <TraySlot $w={24}><NetworkIcon /></TraySlot>
              <TraySlot $w={23}><MutedSpeaker /></TraySlot>
              <TraySlot $w={62}><RemoteClock>10:21 PM</RemoteClock></TraySlot>
              <TraySlot $w={40}><ActionCenter /></TraySlot>
              <RemoteEdge />
            </RemoteTray>
          </RemoteBar>
        </BrowserWindow>
      </Desktop>

      <HostBar>
        <StartSlot><WinLogo /></StartSlot>
        <HostApps>
          <HostSlot><EdgeLogo s={24} /></HostSlot>
          <HostSlot $stack><FolderIcon s={22} /></HostSlot>
          <HostSlot><TeamViewer /></HostSlot>
          <HostSlot $stack><VisualStudio /></HostSlot>
          <HostSlot><ToolsIcon s={24} /></HostSlot>
          <HostSlot $current><AnySquare /></HostSlot>
          <HostSlot><VSCode /></HostSlot>
        </HostApps>
        <HostTray>
          <TraySlot $w={24}><Chevron /></TraySlot>
          <TraySlot $w={24}><CameraIcon /></TraySlot>
          <TraySlot $w={24}><BatteryIcon /></TraySlot>
          <TraySlot $w={25}><WifiIcon /></TraySlot>
          <TraySlot $w={23}><SpeakerIcon /></TraySlot>
          <TraySlot $w={36}><Lang>ENG</Lang></TraySlot>
          <TraySlot $w={68}><Clock><span>22:21</span><span>03/28/2022</span></Clock></TraySlot>
          <TraySlot $w={46}><NotifyBox><Notes /><NotifyBadge>7</NotifyBadge></NotifyBox></TraySlot>
          <ShowDesktop />
        </HostTray>
      </HostBar>
    </Screen>
  );
}
